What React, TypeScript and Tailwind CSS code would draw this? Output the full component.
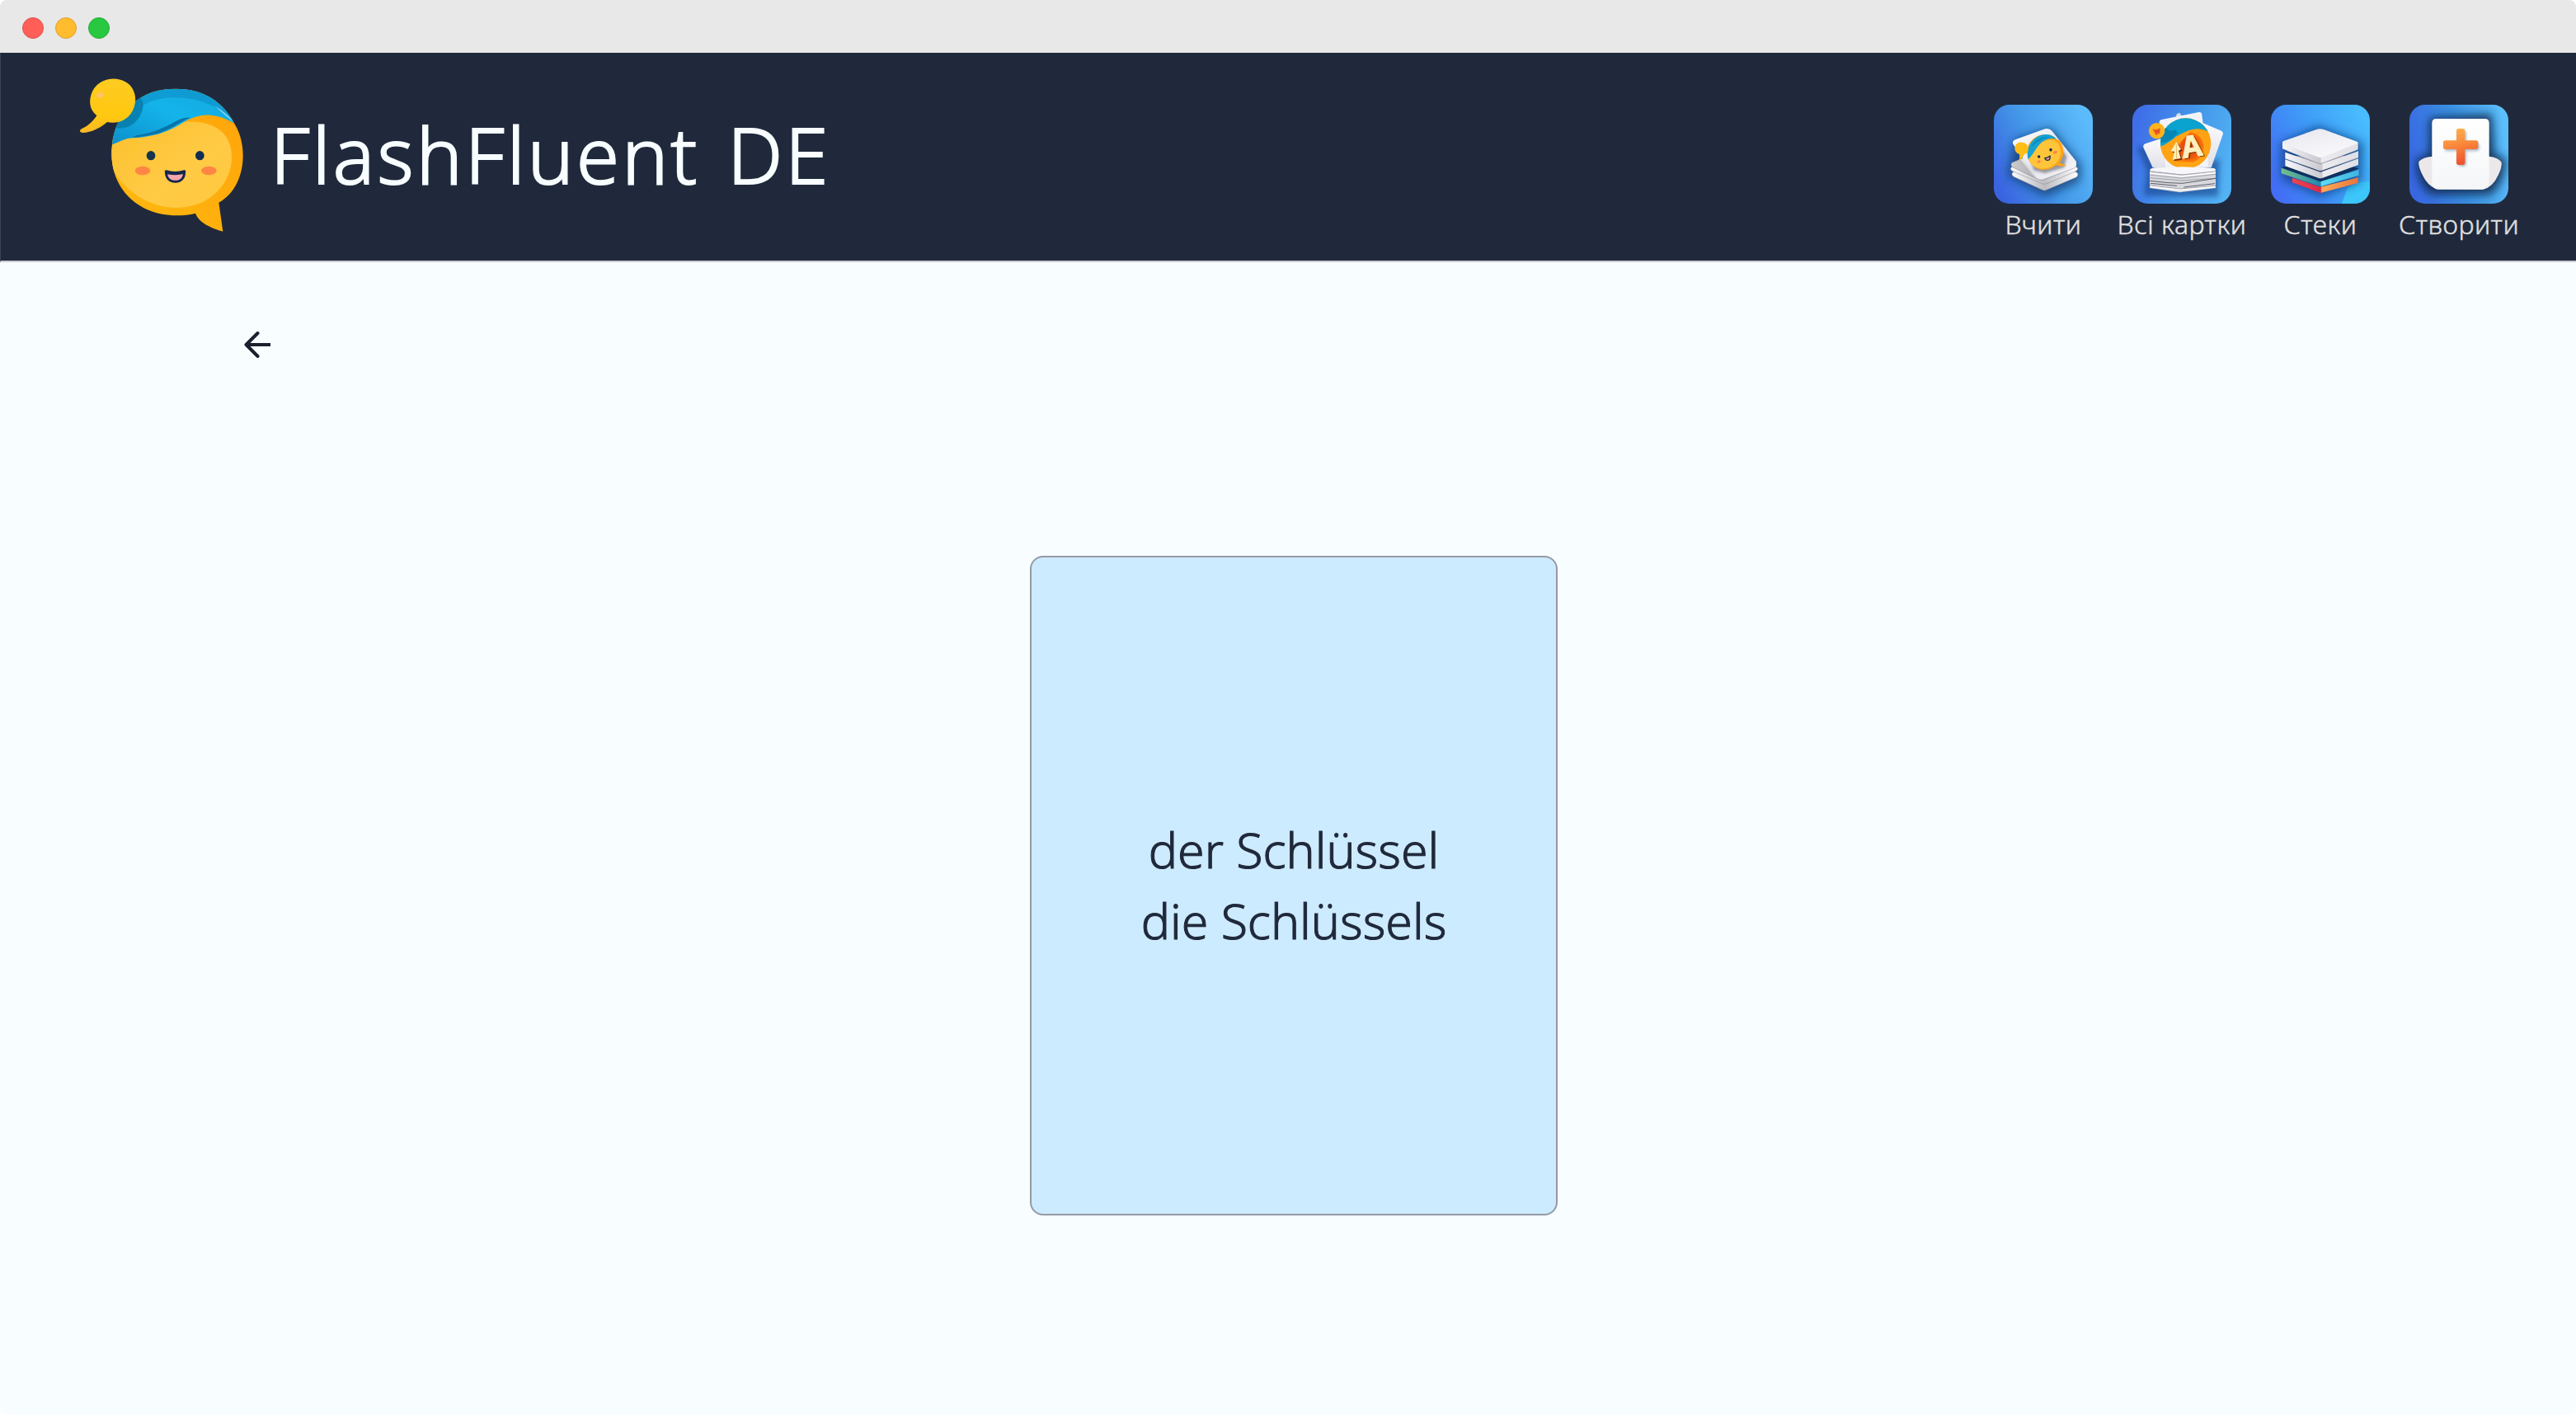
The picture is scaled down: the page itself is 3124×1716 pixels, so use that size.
import React from "react";

function Logo() {
  return (
    <svg viewBox="285 279 606 570" className="h-[190px] w-[202px] shrink-0">
      <defs>
        <linearGradient id="lgFace" x1="0" y1="0" x2="1" y2="1">
          <stop offset="0" stopColor="#fbc02d" />
          <stop offset="0.6" stopColor="#ffca45" />
          <stop offset="1" stopColor="#ffc83d" />
        </linearGradient>
        <linearGradient id="lgRim" x1="0" y1="1" x2="1" y2="0">
          <stop offset="0" stopColor="#ffb90f" />
          <stop offset="1" stopColor="#ffa30a" />
        </linearGradient>
        <linearGradient id="lgHair" x1="0" y1="1" x2="1" y2="0">
          <stop offset="0" stopColor="#0c8fcb" />
          <stop offset="0.5" stopColor="#14b4ea" />
          <stop offset="1" stopColor="#11a5dc" />
        </linearGradient>
        <linearGradient id="lgBall" x1="0" y1="0" x2="0" y2="1">
          <stop offset="0" stopColor="#fdcb22" />
          <stop offset="0.7" stopColor="#ffc80f" />
          <stop offset="1" stopColor="#fdb827" />
        </linearGradient>
        <clipPath id="lgHead">
          <path d="M408 525C414 470 436 420 478 382C522 338 580 323 640 323C735 323 806 365 850 445C872 480 884 520 884 566C884 640 852 706 796 737L811 842C760 828 722 806 711 776C690 782 668 784 643 784C507 784 402 690 406 550Z" />
        </clipPath>
      </defs>
      <path d="M408 525C414 470 436 420 478 382C522 338 580 323 640 323C735 323 806 365 850 445C872 480 884 520 884 566C884 640 852 706 796 737L811 842C760 828 722 806 711 776C690 782 668 784 643 784C507 784 402 690 406 550Z" fill="url(#lgRim)" />
      <g clipPath="url(#lgHead)">
        <path d="M395 540L420 490C520 500 600 470 670 443C780 436 843 485 843 570C843 680 750 756 642 756C570 756 500 724 450 670C420 640 395 600 395 540Z" fill="url(#lgFace)" />
        <path d="M400 528C436 518 446 506 480 502C560 498 605 482 660 450C730 405 790 412 856 450L860 300L400 300Z" fill="url(#lgHair)" />
        <path d="M505 398C550 345 700 335 800 400C820 415 838 432 852 446L860 380L700 300L500 330L470 400Z" fill="#0f94cc" opacity="0.75" />
        <path d="M780 385C810 402 835 425 850 444C830 430 805 405 780 385Z" fill="#8adcf5" />
        <path d="M498 492C560 485 610 458 650 436C665 429 682 426 692 428C660 440 630 465 590 480C560 492 525 496 480 501Z" fill="#0875aa" />
        <path d="M490 350C530 350 528 400 500 435C478 463 450 470 420 466L420 420Z" fill="#087ba8" opacity="0.85" />
      </g>
      <path d="M352 420C318 395 324 350 342 322C366 286 420 276 455 297C496 318 505 375 474 416C452 443 420 450 390 444C365 466 335 480 305 483C290 484 286 474 298 468C322 457 340 440 352 420Z" fill="url(#lgBall)" />
      <ellipse cx="364" cy="346" rx="13" ry="9" fill="#ffc46a" transform="rotate(-25 364 346)" />
      <path d="M491 520C486 545 480 565 480 590" stroke="#f9cf24" strokeWidth="5" fill="none" opacity="0.6" />
      <ellipse cx="549" cy="566" rx="16" ry="17" fill="#15364d" />
      <ellipse cx="727" cy="566" rx="16" ry="17" fill="#132c52" />
      <ellipse cx="519" cy="621" rx="28" ry="15.500" fill="#ff8545" />
      <ellipse cx="760" cy="621" rx="28" ry="15.500" fill="#ff8545" />
      <path d="M604 623C625 630 650 630 671 623C671 646 660 661 638 661C615 661 604 645 604 623Z" fill="#f9a5ad" stroke="#13284d" strokeWidth="9" strokeLinejoin="round" />
      <path d="M609 629C630 633 650 633 666 629" stroke="#13284d" strokeWidth="9" fill="none" />
    </svg>
  );
}

const tile = "h-[120px] w-[120px] shrink-0";

function LearnIcon() {
  return (
    <svg viewBox="54 51 360 360" className={tile}>
      <defs>
        <linearGradient id="leBg" x1="0" y1="0.75" x2="1" y2="0.25">
          <stop offset="0" stopColor="#3a63e0" />
          <stop offset="0.45" stopColor="#4397e8" />
          <stop offset="1" stopColor="#5cbcfb" />
        </linearGradient>
        <linearGradient id="leCard" x1="0" y1="0" x2="1" y2="1">
          <stop offset="0" stopColor="#ffffff" />
          <stop offset="0.55" stopColor="#e4e4ec" />
          <stop offset="1" stopColor="#f8f8fb" />
        </linearGradient>
        <linearGradient id="leEdge" x1="0" y1="0" x2="1" y2="0">
          <stop offset="0" stopColor="#fafafa" />
          <stop offset="0.5" stopColor="#bcbcc2" />
          <stop offset="1" stopColor="#ffffff" />
        </linearGradient>
        <filter id="leBlur" x="-40%" y="-40%" width="180%" height="180%"><feGaussianBlur stdDeviation="17" /></filter>
        <filter id="leSoft" x="-40%" y="-40%" width="180%" height="180%"><feGaussianBlur stdDeviation="5" /></filter>
        <clipPath id="leClip"><rect x="54" y="51" width="360" height="360" rx="56" /></clipPath>
      </defs>
      <rect x="54" y="51" width="360" height="360" rx="56" fill="url(#leBg)" />
      <g clipPath="url(#leClip)">
        <path d="M130 180L260 135L370 270L365 330L240 385L105 310Z" fill="#0d3565" opacity="0.75" filter="url(#leBlur)" />
      </g>
      <g stroke="#85868f" strokeWidth="1.500">
        <path d="M122 297L232 250L354 296Q366 303 354 315L248 360Q238 366 228 360L126 313Q116 305 122 297Z" fill="url(#leEdge)" />
        <path d="M118 278L232 235L354 277Q364 284 354 292L246 338Q236 343 226 337L120 292Q111 285 118 278Z" fill="url(#leEdge)" />
        <path d="M120 262L232 215L350 262Q358 272 350 280L236 324Q226 328 214 322L122 278Q114 270 120 262Z" fill="url(#leEdge)" />
      </g>
      <path d="M120 262L150 248L204 318L122 278Z" fill="#77777f" opacity="0.35" />
      <path d="M134 177L240 139Q256 135 266 147L352 255Q360 270 344 279L236 321Q214 327 204 310L124 194Q119 183 134 177Z" fill="url(#leCard)" />
      <path d="M180 230L280 180L320 240L310 280L240 300L200 290Z" fill="#55555f" opacity="0.55" filter="url(#leSoft)" />
      <path d="M176 232C170 195 200 158 245 159C262 160 274 167 282 176C300 182 309 204 306 232C304 244 299 254 291 262L318 272C306 276 292 275 281 271C262 288 236 292 214 284C196 276 181 258 176 232Z" fill="#ffa414" />
      <path d="M178 245C196 228 204 200 236 184C262 172 296 180 297 222C297 258 266 284 232 284C204 282 186 268 178 245Z" fill="#ffc53a" />
      <path d="M179 250C168 205 200 158 245 159C262 160 274 166 282 176C256 170 235 180 220 196C204 214 196 234 179 250Z" fill="#12a3d4" />
      <path d="M190 205C200 178 230 166 262 168C232 172 208 186 190 205Z" fill="#0c86b8" />
      <ellipse cx="218" cy="240" rx="5" ry="5.500" fill="#13284d" />
      <ellipse cx="261" cy="215" rx="5" ry="5.500" fill="#13284d" />
      <ellipse cx="218" cy="258" rx="7" ry="5" fill="#ff8545" transform="rotate(-22 218 258)" />
      <ellipse cx="277" cy="224" rx="8" ry="5" fill="#ff8545" transform="rotate(-22 277 224)" />
      <path d="M240 245Q250 245 258 238Q261 250 251 253Q242 254 240 245Z" fill="#f9a5ad" stroke="#13284d" strokeWidth="4" />
      <path d="M157 188A23 23 0 0 1 165 232Q160 245 145 255Q149 240 147 231A22 22 0 0 1 157 188Z" fill="#ffbd18" />
    </svg>
  );
}

function CardsIcon() {
  return (
    <svg viewBox="108 51 360 360" className={tile}>
      <defs>
        <linearGradient id="caBg" x1="0" y1="0.35" x2="1" y2="0.65">
          <stop offset="0" stopColor="#3f6ee8" />
          <stop offset="0.5" stopColor="#4395e8" />
          <stop offset="1" stopColor="#53b2f4" />
        </linearGradient>
        <linearGradient id="caCard" x1="0" y1="0" x2="0" y2="1">
          <stop offset="0" stopColor="#fbfbfd" />
          <stop offset="1" stopColor="#dedee6" />
        </linearGradient>
        <linearGradient id="caDisc" x1="1" y1="0" x2="0" y2="1">
          <stop offset="0" stopColor="#ff9f12" />
          <stop offset="1" stopColor="#ffa915" />
        </linearGradient>
        <radialGradient id="caRed">
          <stop offset="0" stopColor="#d93a0b" />
          <stop offset="0.7" stopColor="#ee5a0a" />
          <stop offset="1" stopColor="#fb7d0c" />
        </radialGradient>
        <filter id="caBlur" x="-40%" y="-40%" width="180%" height="180%"><feGaussianBlur stdDeviation="10" /></filter>
        <clipPath id="caClip"><circle cx="302" cy="192" r="92" /></clipPath>
      </defs>
      <rect x="108" y="51" width="360" height="360" rx="56" fill="url(#caBg)" />
      <path d="M125 205L170 205L195 285L425 250L420 385L150 382L160 290Z" fill="#123f86" opacity="0.6" filter="url(#caBlur)" />
      <path d="M155 193L215 173L235 290L182 280L148 206Q146 197 155 193Z" fill="url(#caCard)" />
      <path d="M365 118L432 146Q440 151 437 160L395 280L330 285Z" fill="url(#caCard)" />
      <path d="M270 84L280 80L300 110L260 110Z" fill="#d9dbe8" />
      <path d="M215 105L350 78Q360 77 361 87L385 275L240 284Q231 284 229 275L206 116Q205 107 215 105Z" fill="#f2f3f8" />
      <circle cx="302" cy="192" r="92" fill="url(#caDisc)" />
      <g clipPath="url(#caClip)">
        <path d="M205 205C240 195 262 165 300 150C330 136 360 135 385 150L370 90L210 90Z" fill="#0aa2cf" />
        <path d="M200 180C215 195 245 192 275 150C260 150 275 140 262 143C238 150 240 140 222 130Z" fill="#0786b5" />
        <path d="M205 205C240 198 245 190 268 165L340 210L300 290L200 280Z" fill="#ffa315" />
        <path d="M320 150A57 57 0 0 1 330 260L270 258Q252 225 290 180Z" fill="url(#caRed)" />
      </g>
      <circle cx="197" cy="146" r="29" fill="#ffb41b" />
      <path d="M181 138L192 142L210 136L208 155L194 163L186 150Z" fill="#ee6725" />
      <path d="M190 146L207 150M193 155L206 141" stroke="#cc3f21" strokeWidth="3" />
      <g strokeLinejoin="round">
        <path d="M254 251L261 222L248 219L268 187L285 213L276 218L284 246Z" fill="#7c2c08" transform="translate(5 5)" />
        <path d="M254 251L261 222L248 219L268 187L285 213L276 218L284 246Z" fill="#fff0bb" />
        <path d="M268 195L269 248" stroke="#d99b4d" strokeWidth="2" />
      </g>
      <g transform="rotate(-9 325 200)" className="font-['Open_Sans',sans-serif] text-[108px] font-bold" textAnchor="middle">
        <text x="328" y="245" fill="#7c2c08" aria-hidden="true">A</text>
        <text x="323" y="240" fill="#fff0bf" stroke="#fff0bf" strokeWidth="3">A</text>
      </g>
      <path d="M171 290L285 305L411 285L411 354L280 370L171 354Z" fill="#d7d7dd" />
      <path d="M180 282L290 277L405 282Q414 287 405 292L288 305L175 292Q167 286 180 282Z" fill="#f7f7fa" />
      <path d="M171 294L288 306L411 294M171 306L285 318L411 304M171 317L288 327L411 319M171 344L280 357L411 346" fill="none" stroke="#a3a3ad" strokeWidth="3" />
      <path d="M172 328L240 335L290 337L411 319M174 337L270 346M295 351L408 338" fill="none" stroke="#45454d" strokeWidth="2.500" />
      <path d="M171 300L287 312L411 298M173 349L282 362L410 350" fill="none" stroke="#ffffff" strokeWidth="5" />
    </svg>
  );
}

function StacksIcon() {
  return (
    <svg viewBox="42 51 360 360" className={tile}>
      <defs>
        <linearGradient id="stBg" x1="0" y1="0.75" x2="1" y2="0.25">
          <stop offset="0" stopColor="#436ef5" />
          <stop offset="0.5" stopColor="#3e9af6" />
          <stop offset="1" stopColor="#49bcfe" />
        </linearGradient>
        <linearGradient id="stEdge" x1="0" y1="0" x2="1" y2="0">
          <stop offset="0" stopColor="#f7f7fb" />
          <stop offset="0.5" stopColor="#c9c8cf" />
          <stop offset="0.52" stopColor="#ececf0" />
          <stop offset="1" stopColor="#dfdfe5" />
        </linearGradient>
        <linearGradient id="stTop" x1="0" y1="0" x2="0.6" y2="1">
          <stop offset="0" stopColor="#e6e6ee" />
          <stop offset="1" stopColor="#f9f9fb" />
        </linearGradient>
        <linearGradient id="stTeal" x1="0" y1="0" x2="1" y2="0">
          <stop offset="0" stopColor="#74c08c" />
          <stop offset="0.5" stopColor="#2585ad" />
          <stop offset="0.52" stopColor="#5fdaf2" />
          <stop offset="1" stopColor="#3fb5e2" />
        </linearGradient>
        <linearGradient id="stRed" x1="0" y1="0" x2="1" y2="0">
          <stop offset="0" stopColor="#ef4350" />
          <stop offset="0.43" stopColor="#d92b49" />
          <stop offset="0.45" stopColor="#ffab58" />
          <stop offset="1" stopColor="#e8743c" />
        </linearGradient>
        <filter id="stBlur" x="-40%" y="-40%" width="180%" height="180%"><feGaussianBlur stdDeviation="17" /></filter>
        <clipPath id="stClip"><rect x="42" y="51" width="360" height="360" rx="56" /></clipPath>
      </defs>
      <rect x="42" y="51" width="360" height="360" rx="56" fill="url(#stBg)" />
      <g clipPath="url(#stClip)">
        <path d="M402 330Q350 330 320 355L300 411L402 411Z" fill="#3cc6fa" />
        <path d="M80 190L215 130L375 190L368 330L222 385L80 320Z" fill="#0c3778" opacity="0.75" filter="url(#stBlur)" />
      </g>
      <path d="M120 317L222 350L359 316L359 336L222 372L120 334Z" fill="url(#stRed)" />
      <path d="M80 279L130 270L300 268L362 283L222 333Z" fill="#10305f" />
      <path d="M80 281L222 331L362 287L362 308L222 349L80 301Z" fill="url(#stTeal)" />
      <path d="M94 250L222 296L360 247L360 270L230 317Q222 320 214 317L94 274Z" fill="url(#stEdge)" />
      <path d="M94 248L214 290Q222 293 230 290L360 245L350 236L100 238Z" fill="#9c9dab" />
      <path d="M94 224L222 268L360 220L360 242L230 289Q222 292 214 289L94 246Z" fill="url(#stEdge)" />
      <path d="M100 219L214 263Q222 266 230 263L352 218L340 205L110 205Z" fill="#9495a4" />
      <path d="M84 186L222 236L359 188L359 214L232 262Q222 266 212 262L84 211Z" fill="url(#stEdge)" />
      <path d="M88 183L208 141Q220 136 234 141L355 185Q362 189 354 193L232 241Q222 245 212 241L88 193Q80 188 88 183Z" fill="url(#stTop)" />
    </svg>
  );
}

function CreateIcon() {
  return (
    <svg viewBox="96 51 360 360" className={tile}>
      <defs>
        <linearGradient id="crBg" x1="0" y1="0.6" x2="1" y2="0.4">
          <stop offset="0" stopColor="#3867e2" />
          <stop offset="0.5" stopColor="#3b90e2" />
          <stop offset="1" stopColor="#5cbffb" />
        </linearGradient>
        <linearGradient id="crPlus" x1="0" y1="0" x2="0.25" y2="1">
          <stop offset="0" stopColor="#ffb64c" />
          <stop offset="0.5" stopColor="#fb8a3d" />
          <stop offset="1" stopColor="#f0552e" />
        </linearGradient>
        <linearGradient id="crPaper" x1="0" y1="0" x2="0" y2="1">
          <stop offset="0" stopColor="#ffffff" />
          <stop offset="1" stopColor="#f5f6f8" />
        </linearGradient>
        <filter id="crBlur" x="-40%" y="-40%" width="180%" height="180%"><feGaussianBlur stdDeviation="16" /></filter>
        <filter id="crSoft" x="-40%" y="-40%" width="180%" height="180%"><feGaussianBlur stdDeviation="4" /></filter>
        <clipPath id="crClip"><rect x="96" y="51" width="360" height="360" rx="56" /></clipPath>
      </defs>
      <rect x="96" y="51" width="360" height="360" rx="56" fill="url(#crBg)" />
      <g clipPath="url(#crClip)">
        <path d="M170 100L395 85L405 230L448 250Q440 340 390 378L175 378Q120 340 120 250L168 230Z" fill="#082747" opacity="0.85" filter="url(#crBlur)" />
      </g>
      <path d="M180 239Q144 242 130 258Q127 275 145 310Q160 342 192 358L365 359Q400 350 420 305Q433 278 431 260Q418 242 385 239Z" fill="#ece8e9" />
      <path d="M178 118Q178 102 194 102H370Q386 102 386 118V334Q386 342 380 347L371 355Q367 359 360 359H200Q194 359 189 355L182 349Q178 346 178 338Z" fill="url(#crPaper)" />
      <path d="M268 144Q283 134 299 144V183H341Q353 198 341 215H299V265Q283 277 268 265V215H225Q213 198 225 183H268Z" fill="#7595a8" opacity="0.6" filter="url(#crSoft)" transform="translate(4 5)" />
      <path d="M267 146Q267 138 275 138H290Q298 138 298 146V181H338Q346 181 346 189V205Q346 213 338 213H298V262Q298 270 290 270H275Q267 270 267 262V213H227Q219 213 219 205V189Q219 181 227 181H267Z" fill="url(#crPlus)" />
    </svg>
  );
}

const navItems = [
  { label: "Вчити", Icon: LearnIcon },
  { label: "Всі картки", Icon: CardsIcon },
  { label: "Стеки", Icon: StacksIcon },
  { label: "Створити", Icon: CreateIcon },
];

export default function App() {
  return (
    <div className="flex h-[1716px] w-[3124px] flex-col overflow-hidden rounded-[8px] bg-[#f8fdff] font-['Noto_Sans',sans-serif]">
      <div className="flex h-16 shrink-0 items-center gap-[14px] bg-[#e8e8e8] pt-1 pl-[27px]">
        <span className="h-[26px] w-[26px] rounded-full border border-[#e0504a] bg-[#ff5f57]" />
        <span className="h-[26px] w-[26px] rounded-full border border-[#dfa035] bg-[#febc2e]" />
        <span className="h-[26px] w-[26px] rounded-full border border-[#24ad3a] bg-[#28c840]" />
      </div>
      <header className="flex h-[254px] shrink-0 items-start justify-between border-b-2 border-l border-b-[#cacbcf] border-l-[#384458] bg-[#20293b] pr-[58px] pl-[94px]">
        <div className="flex pt-[29px]">
          <Logo />
          <h1 className="mt-[34px] ml-[31px] text-[94px] leading-[120px] font-light tracking-[3.2px] whitespace-nowrap text-[#f8fdff] [-webkit-text-stroke:2px_#f8fdff] [word-spacing:6px]">
            FlashFluent DE
          </h1>
        </div>
        <nav className="flex pt-[63px]">
          {navItems.map(({ label, Icon }) => (
            <a key={label} className="flex w-[168px] flex-col items-center">
              <Icon />
              <span className="mt-0.5 text-[32px] leading-[46px] font-light tracking-[0.5px] whitespace-nowrap text-[#e0e0e0] [-webkit-text-stroke:0.4px_#e0e0e0]">
                {label}
              </span>
            </a>
          ))}
        </nav>
      </header>
      <main className="flex flex-1 flex-col">
        <button className="mt-[83px] ml-[296px] h-[34px] w-[34px]" aria-label="Back">
          <svg viewBox="0 0 34 34" className="h-[34px] w-[34px]" fill="none" stroke="#1a202e" strokeWidth="4">
            <path d="M32 17H4" />
            <path d="M16.500 3L2.500 17L16.500 31" strokeLinecap="round" strokeLinejoin="round" />
          </svg>
        </button>
        <section className="mt-[239px] ml-[1249px] flex h-[800px] w-[640px] flex-col items-center justify-center rounded-2xl border-2 border-[#9599a6] bg-[#cdebfe] pb-[2px] text-[59px] leading-[86px] font-light text-[#20293b] [-webkit-text-stroke:1px_#20293b]">
          <p>der Schlüssel</p>
          <p>die Schlüssels</p>
        </section>
      </main>
    </div>
  );
}
